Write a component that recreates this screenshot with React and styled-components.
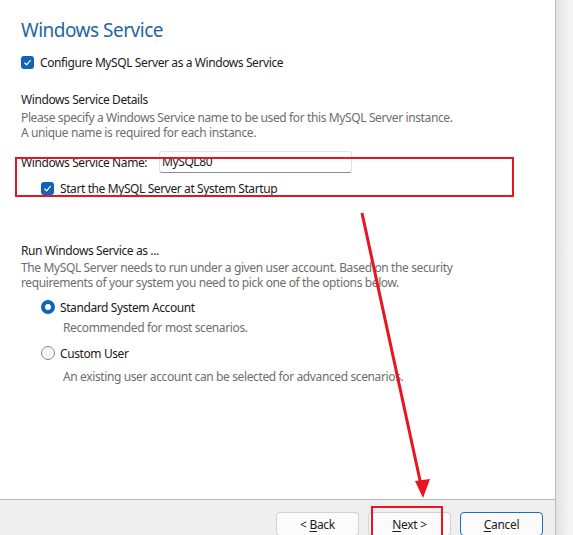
import React from 'react';
import styled, { createGlobalStyle } from 'styled-components';

const GlobalStyle = createGlobalStyle`
  html, body {
    margin: 0;
    padding: 0;
    background: #ffffff;
  }
  body {
    font-family: "Noto Sans", "Open Sans", "Liberation Sans", sans-serif;
    font-size: 12px;
    color: #1b1b1b;
  }
`;

const Window = styled.div`
  position: relative;
  display: flex;
  width: 573px;
  height: 535px;
  overflow: hidden;
`;

const Page = styled.div`
  display: flex;
  flex-direction: column;
  width: 555px;
`;

const Content = styled.div`
  flex: 0 0 499px;
  box-sizing: border-box;
  padding: 17px 0 0 21px;
  background: #ffffff;
`;

const SideStrip = styled.div`
  flex: 1;
  border-left: 1px solid #bdbdbd;
  background: linear-gradient(to right, #e2e2e2, #f1f1f1 60%, #f4f4f4);
`;

const Title = styled.h1`
  margin: 0;
  font-size: 19px;
  line-height: 26px;
  font-weight: 400;
  color: #2466a0;
  letter-spacing: -0.5px;
`;

const Row = styled.div`
  display: flex;
  align-items: center;
  gap: ${(p) => (p.$radio ? 5 : 6)}px;
  height: 16px;
  margin-top: ${(p) => p.$top || 0}px;
  padding-left: ${(p) => p.$indent || 0}px;
  letter-spacing: -0.4px;
`;

const Box = styled.span`
  display: inline-flex;
  align-items: center;
  justify-content: center;
  width: 13px;
  height: 13px;
  border-radius: 3px;
  background: #0f63b8;
  flex: none;
`;

const Radio = styled.span`
  box-sizing: border-box;
  width: 14px;
  height: 14px;
  border-radius: 50%;
  flex: none;
  border: ${(p) => (p.$checked ? '4px solid #0f63b8' : '1px solid #8a8a8a')};
  background: ${(p) => (p.$checked ? '#ffffff' : '#f7f7f7')};
`;

const Heading = styled.div`
  margin-top: ${(p) => p.$top}px;
  line-height: 16px;
  letter-spacing: -0.4px;
  color: #1b1b1b;
`;

const Note = styled.p`
  margin: ${(p) => p.$top || 0}px 0 0;
  padding-left: ${(p) => p.$indent || 0}px;
  line-height: 15px;
  color: #6e6e6e;
  letter-spacing: -0.38px;
`;

const NameRow = styled.div`
  display: flex;
  align-items: center;
  height: 22px;
  margin-top: 11px;
  letter-spacing: -0.4px;
`;

const Label = styled.span`
  width: 138px;
`;

const TextInput = styled.div`
  box-sizing: border-box;
  width: 193px;
  height: 22px;
  padding: 2px 2px;
  line-height: 16px;
  border: 1px solid #e3e3e3;
  border-bottom-color: #8d8d8d;
  border-radius: 3px;
  background: #ffffff;
`;

const Footer = styled.div`
  flex: 1;
  display: flex;
  justify-content: flex-end;
  align-items: flex-start;
  gap: 9px;
  padding: 12px 12px 0 0;
  border-top: 1px solid #b9b9b9;
  background: #efefef;
`;

const Button = styled.button`
  box-sizing: border-box;
  width: 83px;
  height: 24px;
  padding: 0;
  border: 1px solid ${(p) => (p.$primary ? '#1a6fc4' : '#d2d2d2')};
  border-bottom-color: ${(p) => (p.$primary ? '#1a6fc4' : '#bdbdbd')};
  border-radius: 4px;
  background: #fbfbfb;
  font-family: inherit;
  font-size: 12px;
  color: #1b1b1b;
  letter-spacing: -0.3px;

  u {
    text-decoration: underline;
    text-underline-offset: 2px;
  }
`;

const Overlay = styled.svg`
  position: absolute;
  left: 0;
  top: 0;
  pointer-events: none;
`;

const Check = () => (
  <Box>
    <svg width="9" height="9" viewBox="0 0 9 9">
      <path d="M1.5 4.8 L3.6 6.8 L7.6 2.2" fill="none" stroke="#ffffff" strokeWidth="1.2" />
    </svg>
  </Box>
);

export default function App() {
  return (
    <Window>
      <GlobalStyle />
      <Page>
        <Content>
          <Title>Windows Service</Title>
          <Row $top={11}>
            <Check />
            <span>Configure MySQL Server as a Windows Service</span>
          </Row>

          <Heading $top={22}>Windows Service Details</Heading>
          <Note $top={2}>
            Please specify a Windows Service name to be used for this MySQL Server instance.
            <br />
            A unique name is required for each instance.
          </Note>

          <NameRow>
            <Label>Windows Service Name:</Label>
            <TextInput>MySQL80</TextInput>
          </NameRow>
          <Row $top={7} $indent={20}>
            <Check />
            <span>Start the MySQL Server at System Startup</span>
          </Row>

          <Heading $top={47}>Run Windows Service as ...</Heading>
          <Note $top={1}>
            The MySQL Server needs to run under a given user account. Based on the security
            <br />
            requirements of your system you need to pick one of the options below.
          </Note>

          <Row $top={9} $indent={20} $radio>
            <Radio $checked />
            <span>Standard System Account</span>
          </Row>
          <Note $top={5} $indent={42}>Recommended for most scenarios.</Note>
          <Row $top={10} $indent={20} $radio>
            <Radio />
            <span>Custom User</span>
          </Row>
          <Note $top={8} $indent={42}>An existing user account can be selected for advanced scenarios.</Note>
        </Content>
        <Footer>
          <Button>&lt; <u>B</u>ack</Button>
          <Button><u>N</u>ext &gt;</Button>
          <Button $primary><u>C</u>ancel</Button>
        </Footer>
      </Page>
      <SideStrip />

      <Overlay width="573" height="535" viewBox="0 0 573 535">
        <rect x="16" y="158" width="497" height="38" fill="none" stroke="#e8141f" strokeWidth="2" />
        <rect x="372" y="507" width="70" height="40" fill="none" stroke="#e8141f" strokeWidth="2" />
        <line x1="362" y1="213" x2="421" y2="485" stroke="#e8141f" strokeWidth="3" />
        <polygon points="423,498 415,481 430,479" fill="#e8141f" />
      </Overlay>
    </Window>
  );
}
